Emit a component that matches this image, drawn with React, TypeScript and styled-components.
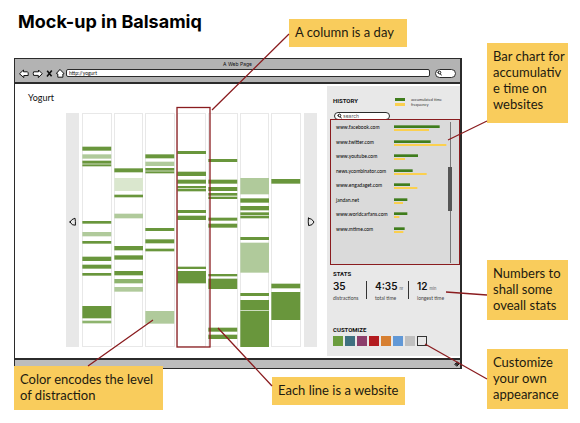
import React from "react";
import styled, { createGlobalStyle } from "styled-components";

const ink = "#2b2b2b";
const red = "#8a1c1f";
const green = "#69963c";
const softGreen = "#8eb46e";
const paleGreen = "#b0ca9b";
const mistGreen = "#dae7ce";

const GlobalStyle = createGlobalStyle`
  * { box-sizing: border-box; }
  body { margin: 0; background: #fff; color: #111; font-family: Lato, "Liberation Sans", sans-serif; }
  button, input { font: inherit; color: inherit; margin: 0; padding: 0; }
`;

const Board = styled.main`
  position: relative;
  padding: 0 12px 14px 14px;
`;

const Title = styled.h1`
  margin: 0;
  padding: 10px 4px 0;
  height: 43px;
  font: 700 18px/24px Inter, sans-serif;
  color: #000;
`;

const Columns = styled.div`
  display: grid;
  grid-template-columns: minmax(0, 1fr) 81px;
  column-gap: 25px;
  align-items: start;
`;

const Browser = styled.section`
  margin-top: 15px;
  border: 1px solid ${ink};
  border-right-width: 2px;
  background: #fff;
`;

const Chrome = styled.header`
  background: #b3b3b3;
  border-bottom: 2px solid ${ink};
  height: 25px;
  padding: 2px 4px 0;
`;

const ChromeTitle = styled.div`
  font: 400 5px/6px Inter, sans-serif;
  text-align: center;
`;

const Toolbar = styled.div`
  display: flex;
  align-items: center;
  height: 12px;
`;

const Nav = styled.nav`
  display: flex;
  gap: 2px;
  margin-right: 1px;
`;

const IconButton = styled.button`
  display: flex;
  border: 0;
  background: none;
`;

const Address = styled.input`
  flex: 1;
  min-width: 0;
  height: 8px;
  border: 1px solid ${ink};
  border-radius: 2px;
  background: #fff;
  padding: 0 2px;
  font-size: 5px;
  line-height: 6px;
`;

const FindBox = styled.label`
  display: flex;
  align-items: center;
  width: 21px;
  height: 9px;
  margin-left: 5px;
  padding-left: 1px;
  border: 1px solid ${ink};
  border-radius: 5px;
  background: #fff;
`;

const BareInput = styled.input`
  flex: 1;
  min-width: 0;
  height: 6px;
  border: 0;
  outline: 0;
  background: none;
  font: 400 5px/6px Inter, sans-serif;
  &::placeholder { color: #555; opacity: 1; }
`;

const Body = styled.div`
  display: flex;
  justify-content: space-between;
`;

const Days = styled.div`
  flex: 1;
  min-width: 0;
  padding: 8px 10px 11px 13px;
`;

const SiteName = styled.h2`
  margin: 0 0 9px;
  font: 400 9px/12px Lato, sans-serif;
`;

const Calendar = styled.div`
  display: flex;
  gap: 3px;
  height: 234px;
  margin-left: 38px;
`;

const Pager = styled.button`
  display: flex;
  align-items: center;
  justify-content: center;
  flex: none;
  width: 13px;
  padding-bottom: 16px;
  border: 0;
  background: #e8e8e8;
`;

const DayGrid = styled.div`
  flex: 1;
  display: grid;
  grid-template-columns: repeat(7, 1fr);
  gap: 2px;
`;

const Day = styled.div`
  min-width: 0;
  box-shadow: inset 0 0 0 1px #e8e8e8;
  svg { display: block; width: 100%; height: 100%; }
`;

const Sidebar = styled.aside`
  flex: none;
  width: 133px;
  margin: 2px 0;
  background: #e8e8e8;
`;

const Heading = styled.h3`
  margin: 0;
  font: 700 6px/8px Roboto, sans-serif;
`;

const HistoryHead = styled.div`
  display: flex;
  padding: 11px 6px 0;
`;

const Legend = styled.div`
  margin-left: 37px;
`;

const LegendItem = styled.div<{ $color: string }>`
  display: flex;
  align-items: center;
  gap: 6px;
  font: 400 4px/5px Lato, sans-serif;
  color: #333;
  white-space: nowrap;
  &::before { content: ""; width: 10px; height: 3px; background: ${(p) => p.$color}; }
`;

const SearchBox = styled.label`
  display: flex;
  align-items: center;
  gap: 1px;
  width: 56px;
  height: 8px;
  margin: 5px 0 0 7px;
  padding-left: 2px;
  border: 1px solid ${ink};
  border-radius: 4px;
  background: #fff;
`;

const HistoryBox = styled.div`
  display: flex;
  height: 146px;
  margin: -1px 0 0 3px;
  padding: 0 7px 0 5px;
  border: 1px solid ${red};
  background: #dadada;
`;

const SiteList = styled.ul`
  flex: 1;
  height: 116px;
  margin: 0;
  padding: 0;
  list-style: none;
  display: grid;
  grid-template-rows: repeat(8, 1fr);
`;

const Site = styled.li`
  display: grid;
  grid-template-columns: 58px 1fr;
  align-items: center;
  font: 400 5px/6px Lato, sans-serif;
  color: #000;
  svg { display: block; margin-top: 3px; }
`;

const Track = styled.div`
  width: 5px;
  margin: 2px 0 1px;
  padding-top: 45px;
  background: linear-gradient(#777, #777) center / 1px 100% no-repeat;
`;

const Thumb = styled.div`
  height: 44px;
  background: #555;
`;

const Section = styled.section<{ $top: number }>`
  padding: ${(p) => p.$top}px 6px 0;
`;

const StatRow = styled.div`
  display: flex;
  margin-top: 3px;
`;

const Stat = styled.div<{ $width: number }>`
  width: ${(p) => p.$width}px;
  height: 18px;
  white-space: nowrap;
  & + & { border-left: 1px solid #333; padding-left: 8px; }
`;

const Value = styled.div`
  font: 600 10px/11px Inter, sans-serif;
  color: #111;
  small { margin-left: 2px; font-size: 4px; font-weight: 400; color: #555; }
`;

const Caption = styled.div`
  font: 400 5px/8px Lato, sans-serif;
  color: #444;
`;

const Swatches = styled.div`
  display: flex;
  gap: 2px;
  margin-top: 2px;
`;

const Swatch = styled.input<{ $color: string }>`
  appearance: none;
  width: 10px;
  height: 10px;
  background: ${(p) => p.$color};
  border: ${(p) => (p.$color === "transparent" ? "1px solid #333" : "0")};
`;

const StatusBar = styled.footer`
  display: flex;
  justify-content: flex-end;
  align-items: center;
  height: 10px;
  border-top: 2px solid ${ink};
  background: #bdbdbd;
`;

const Rail = styled.div`
  display: flex;
  flex-direction: column;
`;

const Note = styled.p`
  margin: 0;
  padding: 5px 0 7px 6px;
  background: #f9cc5c;
  color: #1d1a10;
  font: 400 13px/16px "Lato", sans-serif;
`;

const RailNote = styled(Note)<{ $gap: number; $height: number }>`
  margin-top: ${(p) => p.$gap}px;
  min-height: ${(p) => p.$height}px;
`;

const Callout = styled(Note)<{ $left: number; $top: number; $width: number }>`
  position: absolute;
  left: ${(p) => p.$left}px;
  top: ${(p) => p.$top}px;
  width: ${(p) => p.$width}px;
`;

const Connectors = styled.svg`
  position: absolute;
  inset: 0;
  width: 100%;
  height: 423px;
  pointer-events: none;
`;

type Block = [y: number, height: number, color?: string];

/* Each day is 702 units tall, three units to a pixel. */
const days: Block[][] = [
  [[101, 12], [124, 13, paleGreen], [143, 9], [154, 6], [324, 8], [357, 13, paleGreen], [384, 8], [431, 13], [455, 12], [480, 8], [579, 37], [623, 8, softGreen]],
  [[166, 12], [195, 39, mistGreen], [245, 8], [302, 14, paleGreen], [399, 13], [427, 13], [474, 13], [498, 13, softGreen], [522, 14, paleGreen]],
  [[124, 12], [146, 13, paleGreen], [165, 8], [175, 6], [345, 9], [379, 12], [407, 8], [594, 38, paleGreen]],
  [[114, 9], [176, 13], [200, 12], [219, 7], [228, 7], [291, 9], [308, 13], [461, 7], [474, 37]],
  [[138, 9], [200, 12], [222, 12], [240, 8], [251, 7], [314, 9], [332, 12], [483, 7], [497, 31], [644, 12], [665, 13]],
  [[195, 49, paleGreen], [256, 13], [279, 13], [298, 9], [309, 7], [372, 9], [389, 90, paleGreen], [540, 9], [561, 30], [593, 109]],
  [[198, 14], [512, 14], [537, 84]],
];

const sites: [name: string, time: number, frequency: number][] = [
  ["www.facebook.com", 137, 105],
  ["www.twitter.com", 110, 157],
  ["www.youtube.com", 72, 33],
  ["news.ycombinator.com", 56, 98],
  ["www.engadaget.com", 48, 70],
  ["jandan.net", 40, 27],
  ["www.worldcarfans.com", 40, 16],
  ["www.mtime.com", 32, 28],
];

const stats = [
  { value: "35", unit: "", caption: "distractions", width: 33 },
  { value: "4:35", unit: "hr", caption: "total time", width: 42 },
  { value: "12", unit: "min", caption: "longest time", width: 40 },
];

const palette = [
  ["Green", "#6a9c3d"], ["Teal", "#3f7080"], ["Purple", "#8c3e6b"], ["Red", "#b31b1f"],
  ["Orange", "#d77f31"], ["Blue", "#6198d6"], ["Gray", "#bfbfbf"], ["Custom", "transparent"],
];

function Stroke({ d, w = 11, h = 9, fill = "#fff" }: { d: string; w?: number; h?: number; fill?: string }) {
  return (
    <svg width={w} height={h} viewBox={`0 0 ${w} ${h}`} aria-hidden="true">
      <path d={d} fill={fill} stroke="#151515" strokeWidth="1" strokeLinejoin="round" strokeLinecap="round" />
    </svg>
  );
}

function Lens() {
  return <Stroke w={5} h={6} fill="none" d="M1 2.5a1.4 1.4 0 1 0 2.8 0a1.4 1.4 0 1 0-2.8 0M3.2 3.8L4.5 5.2" />;
}

export default function App() {
  return (
    <>
      <GlobalStyle />
      <Board>
        <Title>Mock-up in Balsamiq</Title>
        <Columns>
          <Browser>
            <Chrome>
              <ChromeTitle>A Web Page</ChromeTitle>
              <Toolbar>
                <Nav>
                  <IconButton aria-label="Back"><Stroke d="M.8 4.5L4.5 1V2.8H8.5Q9.5 3 9.2 6.5H4.8V8.2Z" /></IconButton>
                  <IconButton aria-label="Forward"><Stroke d="M10 4.5L6.5 1V2.8H1.6Q.8 4 1.6 6.4H6.3V8.2Z" /></IconButton>
                  <IconButton aria-label="Stop">
                    <svg width="9" height="9" viewBox="0 0 9 9" aria-hidden="true">
                      <path d="M2.2 1.8L6.6 7.2M6.8 1.5L2 7.5" stroke="#111" strokeWidth="1.6" />
                    </svg>
                  </IconButton>
                  <IconButton aria-label="Home"><Stroke w={9} d="M4.2 .7L8 4.6L6.9 5V8.2H1.8V5L.7 4.6Z" /></IconButton>
                </Nav>
                <Address aria-label="Address" defaultValue="http://yogurt" />
                <FindBox>
                  <Lens />
                  <BareInput aria-label="Find on the web" />
                </FindBox>
              </Toolbar>
            </Chrome>
            <Body>
              <Days>
                <SiteName>Yogurt</SiteName>
                <Calendar>
                  <Pager aria-label="Earlier days"><Stroke w={8} h={10} fill="none" d="M1 5Q2.5 2 6 1.2Q6.6 4 6.4 8.2Q3 9 1 5Z" /></Pager>
                  <DayGrid>
                    {days.map((blocks, i) => (
                      <Day key={i}>
                        <svg viewBox="0 0 90 702" preserveAspectRatio="none" aria-hidden="true">
                          {blocks.map(([y, height, color = green]) => (
                            <rect key={y} x="1" y={y} width="88" height={height} fill={color} />
                          ))}
                        </svg>
                      </Day>
                    ))}
                  </DayGrid>
                  <Pager aria-label="Later days"><Stroke w={8} h={10} fill="none" d="M1.4 1.2Q5 1.2 7 5Q5.6 8.6 1.6 8.6Q1 5 1.4 1.2Z" /></Pager>
                </Calendar>
              </Days>
              <Sidebar>
                <HistoryHead>
                  <Heading>HISTORY</Heading>
                  <Legend>
                    <LegendItem $color="#3f7d1c">accumulated time</LegendItem>
                    <LegendItem $color="#fbd04f">frequency</LegendItem>
                  </Legend>
                </HistoryHead>
                <SearchBox>
                  <Lens />
                  <BareInput placeholder="search" aria-label="Search history" />
                </SearchBox>
                <HistoryBox>
                  <SiteList>
                    {sites.map(([name, time, frequency]) => (
                      <Site key={name}>
                        {name}
                        <svg width="54" height="7" viewBox="0 0 162 21" aria-hidden="true">
                          <rect y="1" width={time} height="8" fill="#3f7d1c" />
                          <rect y="12" width={frequency} height="6" fill="#fbd04f" />
                        </svg>
                      </Site>
                    ))}
                  </SiteList>
                  <Track><Thumb /></Track>
                </HistoryBox>
                <Section $top={5}>
                  <Heading>STATS</Heading>
                  <StatRow>
                    {stats.map((s) => (
                      <Stat key={s.caption} $width={s.width}>
                        <Value>{s.value}<small>{s.unit}</small></Value>
                        <Caption>{s.caption}</Caption>
                      </Stat>
                    ))}
                  </StatRow>
                </Section>
                <Section $top={27}>
                  <Heading>CUSTOMIZE</Heading>
                  <Swatches>
                    {palette.map(([name, color]) => (
                      <Swatch key={name} type="radio" name="color" aria-label={name} $color={color} />
                    ))}
                  </Swatches>
                </Section>
              </Sidebar>
            </Body>
            <StatusBar><Stroke w={6} h={6} fill="#333" d="M1 3L3.5 1L5 3L3 5Z" /></StatusBar>
          </Browser>
          <Rail>
            <RailNote $gap={0} $height={80}>Bar chart for accumulativ<br />e time on websites</RailNote>
            <RailNote $gap={137} $height={60}>Numbers to shall some oveall stats</RailNote>
            <RailNote $gap={29} $height={60}>Customize your own appearance</RailNote>
          </Rail>
        </Columns>
        <Callout $left={289} $top={19} $width={118}>A column is a day</Callout>
        <Callout $left={14} $top={366} $width={149}>Color encodes the level of distraction</Callout>
        <Callout $left={272} $top={377} $width={133}>Each line is a website</Callout>
        <Connectors viewBox="0 0 580 423" preserveAspectRatio="none" aria-hidden="true">
          <g fill="none" stroke={red} strokeWidth="1.3">
            <rect x="177" y="107.5" width="33" height="239.5" />
            <path d="M289 34L212 110M487 121L448 140M446 292L487 295M425 344L487 379M153 320L88 366M218 328L272 386" />
          </g>
        </Connectors>
      </Board>
    </>
  );
}
